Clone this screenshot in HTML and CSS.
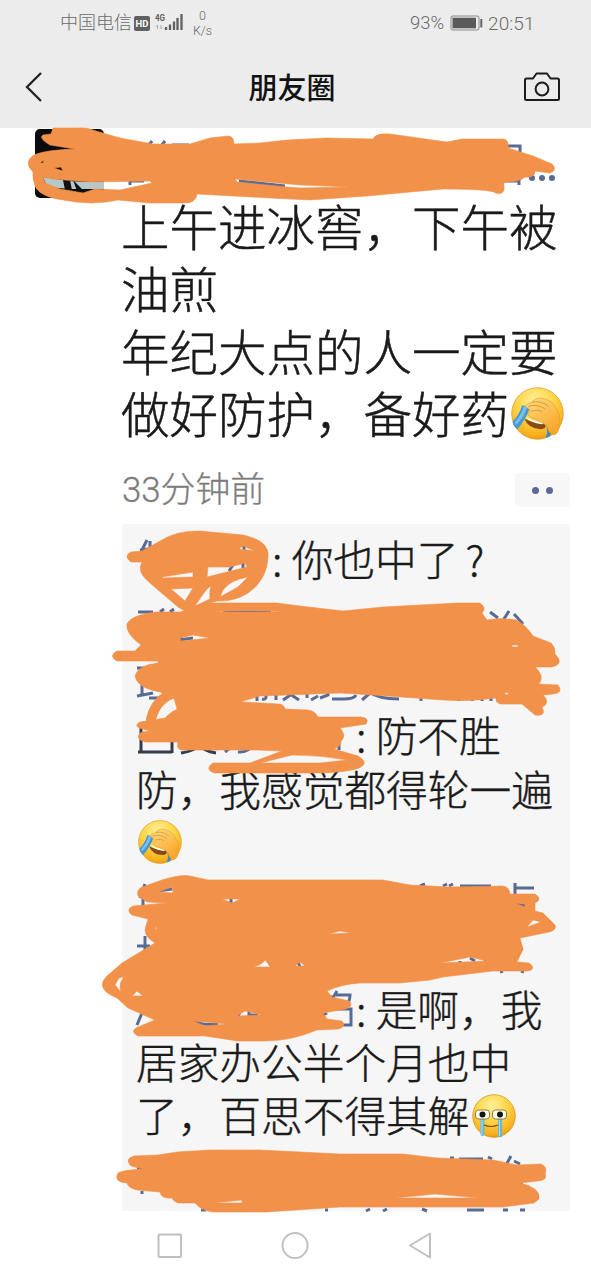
FILE: index.html
```html
<!DOCTYPE html>
<html lang="zh-CN">
<head>
<meta charset="utf-8">
<title>朋友圈</title>
<link rel="stylesheet" href="styles.css">
</head>
<body>
<svg class="defs" width="0" height="0" aria-hidden="true">
  <defs>
    <radialGradient id="face" cx=".45" cy=".25" r=".8">
      <stop offset="0" stop-color="#fff09a"/><stop offset=".45" stop-color="#fed548"/><stop offset=".85" stop-color="#f8ae1c"/><stop offset="1" stop-color="#d98a16"/>
    </radialGradient>
    <linearGradient id="hand" x1="0" y1="0" x2=".6" y2="1">
      <stop offset="0" stop-color="#ffdc80"/><stop offset="1" stop-color="#f9a72b"/>
    </linearGradient>
    <symbol id="facepalm" viewBox="0 0 52 52">
      <circle cx="26" cy="26" r="25.3" fill="url(#face)" stroke="#dda028" stroke-width=".8"/>
      <path d="M13 31Q22 36 34 36Q35 41 29 41.500Q17 41 13 31Z" fill="#8a4a14"/>
      <path d="M14 29Q22 34 32 34L31 36.500Q20 36 14 29Z" fill="#fff"/>
      <path d="M11 18L19 19.500Q14 33 6 41.500Q2 38 1.500 34Q8 28 11 18Z" fill="#4698d4"/>
      <path d="M12.500 19L16 19.500Q12 31 5 37L3.500 35Q10 28 12.500 19Z" fill="#7dbfe9"/>
      <path d="M34 36L41 41L38 48.500L34 50Q37 43 34 36Z" fill="#3c8cc8"/>
      <path d="M14 19Q18 15 21 14.500Q23 10.500 30 11Q39 12 44 20Q48.500 27 48 36Q47 46 42 47Q37 46 35.500 39Q33 35.500 27 33.500Q20 31 16.500 27Q18.500 25 18 22Z" fill="url(#hand)" stroke="#e09a2a" stroke-width=".6"/>
      <path d="M17 19Q26 16 34 22M21 14.800Q30 13 37 19M20 24Q27 21 31 25" fill="none" stroke="#c98324" stroke-width=".9" stroke-opacity=".75"/>
    </symbol>
    <symbol id="crying" viewBox="0 0 44 44">
      <circle cx="22" cy="22" r="21.300" fill="url(#face)" stroke="#d99822" stroke-width=".8"/>
      <path d="M8.500 24h4v17q-2 2-4 0zM26 24h4v19q-2 1-4-1z" fill="#62b9dc"/>
      <path d="M10 24v17M27.500 24v18" stroke="#a9dcec"/>
      <rect x="3.500" y="16" width="14" height="9" rx="3" fill="#fffde9" stroke="#6f6440" stroke-width=".8"/>
      <rect x="20.500" y="16" width="14" height="9" rx="3" fill="#fffde9" stroke="#6f6440" stroke-width=".8"/>
      <circle cx="10.500" cy="20.500" r="3" fill="#141414"/><circle cx="28" cy="20.500" r="3" fill="#141414"/>
      <path d="M12 31Q19 34 26 31" fill="none" stroke="#7b4e12" stroke-width="1.200"/>
    </symbol>
  </defs>
</svg>

<div class="screen">
  <header class="top">
    <div class="status">
      <span class="carrier">中国电信</span>
      <span class="hd">HD</span>
      <svg class="signal" width="28" height="20" viewBox="0 0 28 20">
        <text x="0" y="8" class="net" textLength="10" lengthAdjust="spacingAndGlyphs">4G</text>
        <path d="M2.500 12v4M1 13.500l1.500-1.500M6 12v4M6 16l1.500-1.500" stroke="#aaa" fill="none"/>
        <path d="M11 14v3M15 11.500v5.500M19 8.500v8.500M22.500 5v12M26.500 1v16" stroke="#606060" stroke-width="2.300"/>
      </svg>
      <span class="speed"><span>0</span><span>K/s</span></span>
      <span class="percent">93%</span>
      <svg class="battery" width="33" height="16" viewBox="0 0 33 16">
        <rect x="1" y="1" width="28" height="14" rx="2.500" fill="none" stroke="#aaa" stroke-width="1.500"/>
        <rect x="2.500" y="2.700" width="23.500" height="10.600" fill="#5a5a5a"/>
        <path d="M31.300 4v8.500" stroke="#666" stroke-width="2"/>
      </svg>
      <span class="clock">20:51</span>
    </div>
    <div class="titlebar">
      <svg width="18" height="32" viewBox="0 0 18 32"><path d="M16 2L2 16L16 30" fill="none" stroke="#222" stroke-width="2.300"/></svg>
      <h1>朋友圈</h1>
      <svg width="38" height="30" viewBox="0 0 38 30">
        <path d="M3.500 6.500H10L13.500 1.500H24L27.500 6.500H34.500Q36 6.500 36 8V26.500Q36 28 34.500 28H3.500Q2 28 2 26.500V8Q2 6.500 3.500 6.500Z" fill="none" stroke="#1c1c1c" stroke-width="2" stroke-linejoin="round"/>
        <circle cx="19" cy="17" r="6.400" fill="none" stroke="#1c1c1c" stroke-width="2"/>
      </svg>
    </div>
  </header>

  <main class="feed">
    <svg class="avatar" width="69" height="69" viewBox="0 0 69 69">
      <rect width="69" height="69" rx="5" fill="#0b0b0d"/>
      <path d="M8 48L34 52L50 53H69V60H35L12 58Z" fill="#b6c8ca"/>
      <path d="M28 51h7l2 10h-7zM38 51l10 10-6 1z" fill="#111"/>
    </svg>
    <article class="post">
      <div class="author"><span class="name"></span><span class="more"><i></i><i></i><i></i></span></div>
      <div class="body">
        <p>上午进冰窖，下午被</p>
        <p>油煎</p>
        <p>年纪大点的人一定要</p>
        <p>做好防护，备好药<svg class="emoji-lg"><use href="#facepalm"/></svg></p>
      </div>
      <div class="meta"><time>33分钟前</time><span class="action"><i></i><i></i></span></div>
      <section class="comments">
        <div class="comment first">
          <p class="indent">: 你也中了<span class="ask">?</span></p>
        </div>
        <div class="comment second">
          <p></p>
          <p></p>
          <p class="reply">: 防不胜</p>
          <p>防，我感觉都得轮一遍</p>
          <p><svg class="emoji-sm"><use href="#facepalm"/></svg></p>
        </div>
        <div class="comment">
          <p></p>
          <p></p>
          <p class="reply">: 是啊，我</p>
          <p>居家办公半个月也中</p>
          <p>了，百思不得其解<svg class="emoji-sm"><use href="#crying"/></svg></p>
        </div>
      </section>
    </article>
  </main>

  <nav class="keys">
    <svg width="26" height="28" viewBox="0 0 26 28"><rect x="1.500" y="2.500" width="22.500" height="22.500" rx="1" class="key"/></svg>
    <svg width="28" height="28" viewBox="0 0 28 28"><circle cx="14" cy="13.500" r="12.500" class="key"/></svg>
    <svg width="26" height="28" viewBox="0 0 26 28"><path d="M3 13.500L23 1.500V25.500Z" class="key" stroke-linejoin="round"/></svg>
  </nav>

  <svg class="marker" width="591" height="1280" viewBox="0 0 591 1280">
    <!-- ink left visible around the marker strokes -->
    <g class="ink">
      <path d="M149 145l3-4M162 145l3-4M172 145h17M130 185v-4h14M239 181l46 5M508 146h12v6M504 181h15v4"/>
      <path d="M141 552l6-12M140 550l18-2M150 541v6M244 543v9M229 571l4-6M243 568v-6"/>
      <path d="M138 612h15M160 612l4-3M170 612l4-3M223 612h48M462 613h19M490 612l8 6M509 611l-7 11M514 614l9 10M138 638h4M163 637h6M179 640l14-2M181 635v5"/>
      <path d="M137 668h11M137 696l16-3M142 684v10M149 698h12M183 695v5M239 700l8-3M257 695v6M266 689v8q0 3-4 2M276 691v9M283 700l9-6M287 692l12 8M307 689v9M311 700l7-4M320 698l8-3v-4M332 699h12q10 0 12-4M362 700l8-7M369 692q10 7 30 7M421 696v5M459 696v5M472 696v5M482 694v7M491 694v7"/>
      <path d="M225 752l8-7M238 752q10 1 16-8M339 730v20"/>
      <path d="M140 898l5-14M143 889v27M157 891l15-2M226 889h5M236 889h6M252 889h5M275 889h5M231 899v4M420 886l5-2M443 886l4-2M449 886l4-2M460 886h31M515 883v12M515 888h19M145 936v14M137 946h13M137 998h12M137 1025l5-12M268 961l4 6M298 962l2 5M165 1026l10-2M194 1021q10 5 24 3M238 1016l2-4M249 1010v5h9M327 997l8 0M337 991l-6 10M336 995h14q0 6-4 11M335 1009h16v16h-16M323 1015l4-2M518 938v8M522 948l-6 11M460 961v3M470 958l5 3M484 961l4-1M500 972l3-1M521 971l3 1M516 904l10 2M491 950l8 1"/>
      <path d="M137 1168l8 1M142 1191v3M201 1210h5M325 1210h3M366 1211l4-2M383 1211l4-2M422 1209l5 2M450 1158l4 0M459 1159h24M488 1157l4 2M511 1156l-5 9M514 1161l6 3M518 1184h5M467 1210h17M503 1210h5M520 1210h5"/>
    </g>
    <path class="ink dark" d="M141 728v25M138 752h34M172 740v13M181 753q14-2 18-8q5 6 17 8"/>
    <g class="paint">
      <path d="M53 128L77 128Q87 127 96 131L120 138L153 144H190L210 138L228 136Q234 136 234 144L260 143L287 140L327 138L373 139Q375 133 390 134L447 142L462 139H503Q509 139 508 148L533 156L552 164Q558 170 550 173L535 171Q535 178 525 177Q520 182 504 182V190Q502 195 496 193Q490 189 443 189L367 196L310 200L270 198L197 194Q196 203 185 203H150L118 200Q92 206 63 200Q42 197 36 188Q32 179 33 172Q23 162 34 155Q45 150 75 149L50 145Q38 138 43 135L51 134ZM43 177L53 179L90 182L150 181L152 183L120 190L95 189L83 193L60 189L45 183ZM235 179L300 185L350 187L300 188L287 187L237 182ZM40 163l4-3-1 3ZM54 168l7-1 2 4Z"/>
      <path d="M131 552L142 551L160 541Q178 530 200 531L243 535Q270 541 268 557Q267 580 248 593Q234 602 217 601L195 607L187 612L178 607L150 583Q136 572 142 562H131Q123 556 131 552ZM239 549L243 546L255 551ZM208 567L230 567L245 563L247 567L207 577ZM162 577L193 572V577L163 578ZM171 589L193 588L185 601ZM208 588L211 586Q209 592 210 599L195 606L203 594ZM223 590Q230 580 248 577L238 587L220 597Z"/>
      <path d="M195 607Q201 603 210 603H277L300 606L343 611L383 607L457 603H480Q487 608 482 613L487 620Q502 617 516 620Q525 624 533 636L551 643Q556 648 555 654Q565 664 552 667H535Q545 676 539 684L558 685Q564 693 553 694L543 695Q551 703 542 707Q547 717 535 715L522 704H500Q495 702 496 698Q470 702 443 700L373 695L340 693L260 696L223 707L180 720L174 698L160 692Q137 688 135 676Q138 665 158 663V661H117Q108 656 117 651H135L141 645Q125 633 127 624Q131 615 156 612L180 612ZM210 612Q245 609 285 612ZM180 638L193 635L210 638L181 641ZM512 645h6v2h-6ZM504 694l3-2 2 3Z"/>
      <path d="M140 722L165 718Q176 705 210 700L278 704Q284 704 285 709L308 710Q315 711 318 717H361Q370 718 366 724L340 728Q347 736 341 741Q342 746 334 749L358 756Q370 763 359 768Q345 773 313 773H214Q204 769 213 763H250L282 751L257 750H182Q176 749 178 742H145Q133 738 142 732L150 731L139 728Q134 725 140 722ZM260 763L292 755Q320 755 347 760L320 763Z"/>
      <path class="stroke" d="M151 719Q156 699 174 693L204 694"/>
      <path d="M138 896Q136 888 145 886L162 880Q181 874 190 876L208 880H383L410 885L450 887L502 886Q509 886 510 894H535Q543 899 535 903V911L543 913L555 925Q557 930 549 932L520 938L523 949L517 962L529 963Q537 969 528 971L493 971L443 977L430 980L400 983H360Q342 984 327 991L332 997L349 1001Q354 1006 346 1009L323 1013L327 1019L342 1021Q347 1027 338 1029L317 1030Q288 1042 262 1041H238L205 1036H138Q129 1031 138 1027L155 1020L128 1008L117 998Q94 989 107 976L122 963L155 943Q142 935 146 926L148 919L132 915Q125 910 133 906L167 903L147 902ZM115 985L119 978L124 977Q118 984 121 992ZM222 899L240 899L232 903ZM158 892L172 887L173 893ZM253 967Q262 965 265 960L271 967ZM295 966L300 962L305 966ZM328 934L340 931L351 933ZM237 1016L245 1011L262 1015ZM193 1021L227 1024L205 1026ZM132 996L137 991L143 996ZM527 927L533 920L541 922ZM440 963L470 957L487 961ZM515 903L525 904L525 907ZM155 929l1-3 1 3Z"/>
      <path d="M131 1166Q124 1159 134 1156L158 1155L177 1152L210 1150H260L340 1154H403L437 1158L493 1160L517 1165L541 1164Q548 1167 545 1174Q548 1180 538 1181L520 1183Q541 1188 539 1199L534 1203L503 1207H340L267 1212H213Q202 1211 195 1203H178Q173 1201 172 1198Q161 1199 160 1192L137 1190Q128 1188 127 1183Q113 1182 118 1173Q123 1170 143 1169ZM213 1203L242 1200V1203ZM395 1198L435 1194L480 1198Z"/>
    </g>
  </svg>
</div>
</body>
</html>
```
FILE: styles.css
```css
* { box-sizing: border-box; }
body { margin: 0; background: #fff; color: #1a1a1a; font-family: "Noto Sans CJK SC", sans-serif; font-weight: 300; }
p, h1 { margin: 0; }
.defs { display: block; }
.screen { position: relative; width: 591px; height: 1280px; display: flex; flex-direction: column; overflow: hidden; background: #fff; }

.top { height: 128px; background: #ececec; }
.status { display: flex; align-items: center; height: 46px; padding-left: 60px; color: #6a6a6a; font-family: Roboto, "Noto Sans CJK SC", sans-serif; }
.carrier { width: 74px; font-size: 18px; line-height: 24px; white-space: nowrap; }
.hd { width: 16px; height: 15px; border-radius: 2px; background: #606060; color: #fff; font-size: 9.5px; font-weight: 700; line-height: 15px; text-align: center; }
.signal { margin: 0 0 0 5px; }
.net { font: 700 9px Roboto, sans-serif; fill: #606060; }
.speed { display: flex; flex-direction: column; align-items: center; margin-left: 10px; width: 19px; font-size: 12.5px; line-height: 15px; }
.percent { margin-left: 198px; width: 40px; font-size: 18.5px; }
.battery { flex: none; }
.clock { margin-left: 5px; font-size: 19px; letter-spacing: .1px; }
.titlebar { display: flex; align-items: center; justify-content: space-between; height: 82px; padding: 0 30px 0 25px; }
.titlebar h1 { margin: -2px 0 0 18px; color: #111; font-size: 29px; font-weight: 500; line-height: 42px; }

.feed { display: flex; height: 1083px; overflow: hidden; }
.avatar { flex: none; margin: 1px 0 0 35px; }
.post { width: 466px; margin-left: 18px; }
.author { display: flex; justify-content: flex-end; align-items: center; height: 66px; padding: 34px 33px 0 0; }
.more { display: flex; gap: 4px; }
.more i { width: 6px; height: 6px; border-radius: 50%; background: #576b95; }
.body { margin-left: -1px; font-size: 48.5px; -webkit-text-stroke: .5px #1a1a1a; }
.body p { display: flex; align-items: center; height: 62.3px; line-height: 62px; white-space: nowrap; }
.emoji-lg { width: 53px; height: 53px; flex: none; margin: 3px 0 0 2px; }
.meta { display: flex; justify-content: space-between; align-items: center; width: 448px; height: 64px; margin-top: 15px; }
.meta time { color: #7c7c7c; font-family: Roboto, "Noto Sans CJK SC", sans-serif; font-size: 34.8px; line-height: 50px; -webkit-text-stroke: .3px #7c7c7c; }
.action { display: flex; align-items: center; justify-content: center; gap: 7px; width: 55px; height: 34px; border-radius: 4px; background: #f7f7f7; }
.action i { width: 7px; height: 7px; border-radius: 50%; background: #5c6896; }
.comments { width: 448px; height: 700px; margin-top: 2px; padding: 8px 14px; border-radius: 4px; background: #f6f6f6; font-size: 41.7px; -webkit-text-stroke: .4px #1a1a1a; }
.comment { margin-top: 7px; }
.comment p { display: flex; align-items: center; height: 53.3px; line-height: 53px; white-space: pre; }
.comment.first { margin-top: 0; }
.comment.second { margin-top: 16px; }
.indent { padding-left: 136px; }
.ask { margin-left: 7px; }
.reply { padding-left: 220px; }
.emoji-sm { width: 44px; height: 44px; flex: none; margin: 2px 2px 0; }

.keys { display: flex; justify-content: space-between; align-items: center; height: 69px; padding: 0 158px 0 157px; }
.key { fill: none; stroke: #c0c0c0; stroke-width: 2; }
.marker { position: absolute; left: 0; top: 0; pointer-events: none; }
.ink { fill: none; stroke: #576b95; stroke-width: 3; }
.ink.dark { stroke: #333b4d; }
.paint { fill: #f2914a; fill-rule: evenodd; stroke: #f2914a; stroke-width: .6; stroke-linejoin: round; }
.paint .stroke { fill: none; stroke-width: 10; stroke-linecap: round; }
```
